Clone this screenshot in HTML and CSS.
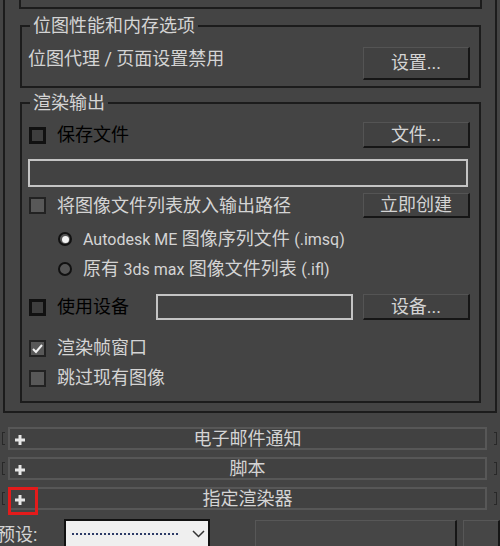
FILE: index.html
```html
<!DOCTYPE html>
<html lang="zh-CN">
<head>
  <meta charset="UTF-8" />
  <meta name="viewport" content="width=device-width, initial-scale=1.0"/>
  <title>渲染设置 - 公用参数</title>
  <link rel="stylesheet" href="styles.css">
</head>
<body>

<div class="panel">
  <div class="stub"></div>

  <fieldset class="group group-bitmap">
    <legend>位图性能和内存选项</legend>
    <div class="row row-bitmap">
      <span class="label">位图代理 / 页面设置禁用</span>
      <button class="btn btn-tall">设置...</button>
    </div>
  </fieldset>

  <fieldset class="group group-output">
    <legend>渲染输出</legend>

    <div class="row row-save">
      <label class="check dim"><span class="box"></span><span>保存文件</span></label>
      <button class="btn">文件...</button>
    </div>

    <input class="field field-path" type="text">

    <div class="row row-list">
      <label class="check"><span class="box"></span><span>将图像文件列表放入输出路径</span></label>
      <button class="btn">立即创建</button>
    </div>

    <label class="radio"><span class="dot on"></span><span><span class="lat">Autodesk ME</span> 图像序列文件 <span class="lat">(.imsq)</span></span></label>
    <label class="radio"><span class="dot"></span><span>原有 <span class="lat">3ds max</span> 图像文件列表 <span class="lat">(.ifl)</span></span></label>

    <div class="row row-device">
      <label class="check dim check-device"><span class="box"></span><span>使用设备</span></label>
      <input class="field field-device" type="text">
      <button class="btn">设备...</button>
    </div>

    <label class="check check-row first"><span class="box checked">
      <svg width="13" height="13" viewBox="0 0 13 13"><polyline points="2,7 5,10 11,3" fill="none" stroke="#f2f2f2" stroke-width="2"/></svg>
    </span><span>渲染帧窗口</span></label>
    <label class="check check-row"><span class="box"></span><span>跳过现有图像</span></label>
  </fieldset>
</div>

<div class="rollouts">
  <div class="roll-row">
    <span class="brk brk-left"></span>
    <div class="bar">
      <svg class="plus" width="10" height="10" viewBox="0 0 10 10"><rect x="3.5" y="0" width="3" height="10" fill="#e6e6e6"/><rect x="0" y="3.5" width="10" height="3" fill="#e6e6e6"/></svg>
      <span class="bar-title">电子邮件通知</span>
    </div>
    <span class="brk brk-right"></span>
  </div>
  <div class="roll-row">
    <span class="brk brk-left"></span>
    <div class="bar">
      <svg class="plus" width="10" height="10" viewBox="0 0 10 10"><rect x="3.5" y="0" width="3" height="10" fill="#e6e6e6"/><rect x="0" y="3.5" width="10" height="3" fill="#e6e6e6"/></svg>
      <span class="bar-title">脚本</span>
    </div>
    <span class="brk brk-right"></span>
  </div>
  <div class="roll-row">
    <span class="brk brk-left"></span>
    <div class="bar">
      <svg class="plus" width="10" height="10" viewBox="0 0 10 10"><rect x="3.5" y="0" width="3" height="10" fill="#e6e6e6"/><rect x="0" y="3.5" width="10" height="3" fill="#e6e6e6"/></svg>
      <span class="bar-title">指定渲染器</span>
      <span class="mark"></span>
    </div>
    <span class="brk brk-right"></span>
  </div>
</div>

<div class="bottom">
  <span class="preset-label">预设:</span>
  <div class="select">
    <span class="dashes"></span>
    <svg width="13" height="8" viewBox="0 0 13 8"><polyline points="1,1 6.5,6.5 12,1" fill="none" stroke="#333" stroke-width="1.5"/></svg>
  </div>
  <div class="rbtn rbtn-wide"></div>
  <div class="rbtn rbtn-small"></div>
</div>

</body>
</html>
```

FILE: styles.css
```css
* {
  box-sizing: border-box;
}

body {
  margin: 0;
  width: 500px;
  height: 546px;
  overflow: hidden;
  background-color: #444444;
  color: #d4d4d4;
  font-family: Roboto, "Noto Sans CJK SC", sans-serif;
  font-size: 18px;
  line-height: 20px;
}

.lat {
  font-size: 16px;
}

/* outer rollout */
.panel {
  margin: 0 3px;
  border: 2px solid #1c1c1c;
  border-top: none;
  padding: 0 14px 8px 15px;
}

.stub {
  height: 9px;
  margin: 0 -1px;
  border: 2px solid #1c1c1c;
  border-top: none;
}

.group {
  margin: 7px 0 0;
  padding: 0 9px 6px 6px;
  border: 2px solid #1c1c1c;
  min-width: 0;
}

.group legend {
  margin-left: 2px;
  padding: 0 3px;
  line-height: 20px;
}

.group-output {
  margin-top: 5px;
  padding-bottom: 8px;
}

.row {
  display: flex;
  align-items: center;
}

.row-bitmap {
  align-items: flex-start;
  height: 33px;
  margin-top: 11px;
}

.row-bitmap .label {
  line-height: 24px;
}

.row-save {
  height: 26px;
  margin-top: 9px;
}

.row-list {
  height: 25px;
  margin-top: 6px;
}

.row-device {
  height: 26px;
  margin-top: 10px;
}

/* buttons */
.btn {
  width: 107px;
  height: 26px;
  margin-left: auto;
  padding: 0;
  background-color: #414141;
  border: 1px solid #545454;
  border-right: 2px solid #161616;
  border-bottom: 2px solid #161616;
  color: #d4d4d4;
  font: inherit;
  line-height: 20px;
}

.btn-tall {
  height: 33px;
}

.row-list .btn {
  height: 25px;
}

/* text fields */
.field {
  display: block;
  height: 28px;
  padding: 0;
  background-color: #424242;
  border: 2px solid #c4c4c4;
  outline: none;
  -webkit-appearance: none;
  appearance: none;
}

.field-path {
  width: calc(100% - 2px);
  margin-top: 11px;
}

.field-device {
  width: 197px;
  height: 26px;
}

/* checkboxes */
.check {
  display: flex;
  align-items: center;
  gap: 11px;
  margin-left: 1px;
}

.check .box {
  display: flex;
  align-items: center;
  justify-content: center;
  width: 17px;
  height: 17px;
  flex: none;
  background-color: #585858;
  border: 2px solid #222;
}

.check.dim {
  color: #000;
}

.check.dim .box {
  background-color: #3e3e3e;
  border: 3px solid #111;
}

.check-device {
  width: 127px;
}

.check-row {
  height: 30px;
}

.check-row.first {
  margin-top: 13px;
}

/* radios */
.radio {
  display: flex;
  align-items: center;
  gap: 11px;
  height: 30px;
  margin-left: 30px;
}

.radio .dot {
  display: flex;
  align-items: center;
  justify-content: center;
  width: 14px;
  height: 14px;
  flex: none;
  border-radius: 50%;
  background-color: #555;
  border: 2px solid #111;
}

.radio .dot.on::after {
  content: "";
  width: 7px;
  height: 7px;
  border-radius: 50%;
  background-color: #f2f2f2;
}

.row-list + .radio {
  margin-top: 6px;
}

/* collapsed rollouts */
.rollouts {
  margin-top: 14px;
}

.roll-row {
  display: flex;
  align-items: center;
  height: 23px;
  margin-bottom: 7px;
}

.brk {
  width: 3px;
  height: 13px;
  border: 1px solid #282828;
}

.brk-left {
  margin-left: 2px;
  border-right: none;
}

.brk-right {
  margin-left: 7px;
  border-left: none;
}

.bar {
  position: relative;
  display: grid;
  grid-template-columns: 1fr auto 1fr;
  align-items: center;
  width: 479px;
  height: 23px;
  margin-left: 3px;
  padding: 0 5px;
  background-color: #414141;
  border: 2px solid #575757;
}

.bar .plus {
  margin-top: 2px;
}

.bar-title {
  line-height: 19px;
}

.mark {
  position: absolute;
  left: -2px;
  top: -2px;
  width: 30px;
  height: 28px;
  border: 3px solid #e31b1b;
}

/* preset row */
.bottom {
  display: flex;
  align-items: flex-start;
  height: 40px;
  margin-top: 9px;
}

.preset-label {
  width: 67px;
  margin-left: -3px;
  margin-top: 6px;
  flex: none;
}

.select {
  display: flex;
  align-items: center;
  width: 146px;
  height: 30px;
  padding: 0 3px 0 6px;
  flex: none;
  background-color: #efefef;
  border: 2px solid #111;
}

.dashes {
  flex: 1;
  height: 2px;
  margin-right: 14px;
  background: repeating-linear-gradient(90deg, #2c3a66 0 2px, transparent 2px 4px);
}

.rbtn {
  height: 30px;
  margin-top: 1px;
  background-color: #464646;
  border-top: 1px solid #575757;
  border-left: 1px solid #575757;
  border-right: 2px solid #161616;
}

.rbtn-wide {
  width: 216px;
  margin-left: 45px;
}

.rbtn-small {
  width: 40px;
  margin-left: 6px;
}
```
